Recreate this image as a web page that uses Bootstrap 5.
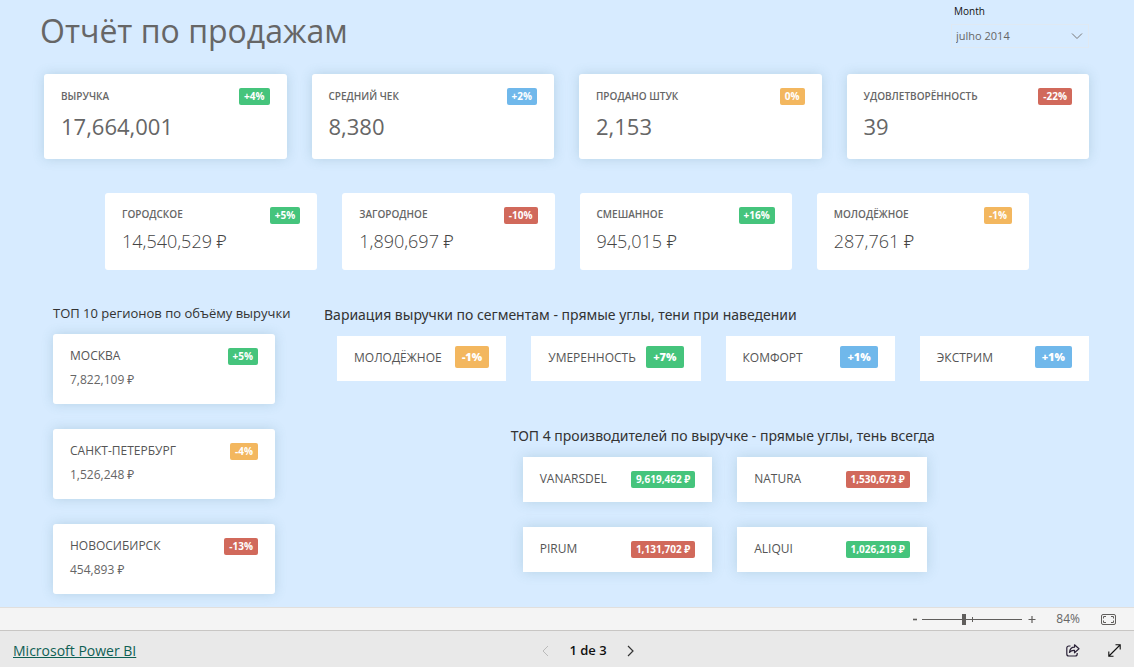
<!DOCTYPE html>
<html lang="ru">
<head>
<meta charset="utf-8">
<meta name="viewport" content="width=device-width, initial-scale=1">
<title>Отчёт по продажам</title>
<link href="https://cdn.jsdelivr.net/npm/bootstrap@5.3.0/dist/css/bootstrap.min.css" rel="stylesheet">
<style>
  body { font-family: "Open Sans", "Noto Sans", sans-serif; color: #666; background: #d7ebff; line-height: 1.2; }
  .report { padding: 8px 45px 12px 44px; }
  .report-title { font-size: 32px; font-weight: 400; line-height: 46px; margin: 0 0 2px -4px; color: #666; }
  .slicer { width: 138px; }
  .slicer label { font-size: 10px; line-height: 12px; color: #111; padding-left: 3px; margin-top: -3px; }
  .slicer .form-select { height: 24px; margin-top: 7px; padding: 0 24px 0 4px; font-size: 11px; line-height: 20px; color: #666; background-color: transparent; border: 1px solid #dfe9f3; border-radius: 0; background-size: 12px 12px; background-position: right 5px center;
    background-image: url("data:image/svg+xml,%3csvg xmlns='http://www.w3.org/2000/svg' viewBox='0 0 12 12'%3e%3cpath d='M1 3.5 6 8.5 11 3.5' fill='none' stroke='%23777'/%3e%3c/svg%3e"); }
  .tiles { display: grid; grid-template-columns: repeat(4, minmax(0, 1fr)); gap: 25px; }
  .tiles-two { grid-template-columns: repeat(2, minmax(0, 1fr)); }
  .tiles-one { grid-template-columns: minmax(0, 1fr); }
  .tiles-main { margin-top: 18px; }
  .tiles-areas { margin: 34px 60px 0 61px; }
  .tile { background: #fff; padding: 14px 17px; border-radius: 3px; }
  .tile-square { border-radius: 0; }
  .tile-shadow { box-shadow: 0 0 12px rgba(80, 135, 145, .24); }
  .tile-label { font-size: 10px; font-weight: 600; line-height: 17px; white-space: nowrap; }
  .tile-areas-label { line-height: 15px; }
  .tile-label-lg { font-size: 12px; font-weight: 500; line-height: 15px; color: #555; }
  .tile-value { white-space: nowrap; }
  .value-lg { font-size: 22px; line-height: 30px; margin-top: 6px; padding-bottom: 4px; }
  .value-md { font-size: 18px; font-weight: 300; line-height: 26px; margin-top: 4px; padding-bottom: 2px; color: #444; }
  .value-sm { font-size: 12px; line-height: 18px; margin-top: 6px; padding-bottom: 1px; }
  .pill { font-size: 10px; font-weight: 700; line-height: 17px; padding: 0 5px; border-radius: 2px; color: #fff; white-space: nowrap; }
  .pill-lg { font-size: 11px; font-weight: 800; line-height: 22px; padding: 0 7px; }
  .tile-slim { padding-top: 10px; padding-bottom: 13px; }
  .up { background: #45c47c; } .down { background: #d1695b; } .warn { background: #f3b75f; } .info { background: #70b8eb; }
  .lower { display: grid; grid-template-columns: minmax(0, 245fr) minmax(0, 765fr); column-gap: 35px; margin-top: 35px; }
  .regions { padding: 0 14px 0 9px; }
  .section-title { margin: 0; color: #333; font-family: "Noto Sans", sans-serif; font-size: 14px; font-weight: 400; line-height: 20px; }
  .regions .section-title { font-family: inherit; font-size: 13px; margin-bottom: 12px; line-height: 17px; }
  .segments .section-title { margin-bottom: 11px; }
  .segments .tiles { margin-left: 13px; }
  .makers { margin: 45px 21.2% 0 24.4%; }
  .makers .section-title { margin-bottom: 11px; white-space: nowrap; }
  .makers .tiles { margin-left: 12px; }
  .zoombar { height: 23px; background: #f4f4f4; border-top: 1px solid #e1dfdd; padding-right: 18px; color: #666; }
  .zoombar button, .pagebar button { border: 0; background: none; padding: 0; display: flex; color: inherit; }
  .zoom-range { appearance: none; width: 100px; height: 12px; margin: 0 6px 0 4px; background: linear-gradient(#605e5c, #605e5c) 50px 50%/1px 5px no-repeat, linear-gradient(#605e5c, #605e5c) 0 50%/100% 1px no-repeat; }
  .zoom-range::-webkit-slider-thumb { appearance: none; width: 4px; height: 11px; background: #605e5c; }
  .zoom-value { font-size: 12px; margin: 0 21px 0 20px; }
  .pagebar { display: grid; grid-template-columns: 1fr auto 1fr; align-items: center; height: 37px; background: #e9e9e9; border-top: 1px solid #c8c6c4; padding: 3px 13px 0; color: #111; }
  .pagebar a { color: #0f6054; font-size: 14px; font-weight: 400; }
  .pagebar nav { margin-left: 42px; }
  .page-count { font-size: 13px; font-weight: 600; }
</style>
</head>
<body class="d-flex flex-column min-vh-100">
<main class="report flex-grow-1">
  <header class="d-flex justify-content-between">
    <h1 class="report-title">Отчёт по продажам</h1>
    <div class="slicer">
      <label class="d-block" for="month">Month</label>
      <select class="form-select" id="month"><option>julho 2014</option></select>
    </div>
  </header>

  <section class="tiles tiles-main">
    <article class="tile tile-shadow"><div class="d-flex justify-content-between"><span class="tile-label">ВЫРУЧКА</span><span class="pill up">+4%</span></div><div class="tile-value value-lg">17,664,001</div></article>
    <article class="tile tile-shadow"><div class="d-flex justify-content-between"><span class="tile-label">СРЕДНИЙ ЧЕК</span><span class="pill info">+2%</span></div><div class="tile-value value-lg">8,380</div></article>
    <article class="tile tile-shadow"><div class="d-flex justify-content-between"><span class="tile-label">ПРОДАНО ШТУК</span><span class="pill warn">0%</span></div><div class="tile-value value-lg">2,153</div></article>
    <article class="tile tile-shadow"><div class="d-flex justify-content-between"><span class="tile-label">УДОВЛЕТВОРЁННОСТЬ</span><span class="pill down">-22%</span></div><div class="tile-value value-lg">39</div></article>
  </section>

  <section class="tiles tiles-areas">
    <article class="tile"><div class="d-flex justify-content-between"><span class="tile-label tile-areas-label">ГОРОДСКОЕ</span><span class="pill up">+5%</span></div><div class="tile-value value-md">14,540,529 ₽</div></article>
    <article class="tile"><div class="d-flex justify-content-between"><span class="tile-label tile-areas-label">ЗАГОРОДНОЕ</span><span class="pill down">-10%</span></div><div class="tile-value value-md">1,890,697 ₽</div></article>
    <article class="tile"><div class="d-flex justify-content-between"><span class="tile-label tile-areas-label">СМЕШАННОЕ</span><span class="pill up">+16%</span></div><div class="tile-value value-md">945,015 ₽</div></article>
    <article class="tile"><div class="d-flex justify-content-between"><span class="tile-label tile-areas-label">МОЛОДЁЖНОЕ</span><span class="pill warn">-1%</span></div><div class="tile-value value-md">287,761 ₽</div></article>
  </section>

  <div class="lower">
    <section class="regions">
      <h2 class="section-title text-nowrap">ТОП 10 регионов по объёму выручки</h2>
      <div class="tiles tiles-one">
        <article class="tile tile-shadow"><div class="d-flex justify-content-between"><span class="tile-label tile-label-lg">МОСКВА</span><span class="pill up">+5%</span></div><div class="tile-value value-sm">7,822,109 ₽</div></article>
        <article class="tile tile-shadow"><div class="d-flex justify-content-between"><span class="tile-label tile-label-lg">САНКТ-ПЕТЕРБУРГ</span><span class="pill warn">-4%</span></div><div class="tile-value value-sm">1,526,248 ₽</div></article>
        <article class="tile tile-shadow"><div class="d-flex justify-content-between"><span class="tile-label tile-label-lg">НОВОСИБИРСК</span><span class="pill down">-13%</span></div><div class="tile-value value-sm">454,893 ₽</div></article>
      </div>
    </section>
    <div>
      <section class="segments">
        <h2 class="section-title">Вариация выручки по сегментам - прямые углы, тени при наведении</h2>
        <div class="tiles">
          <article class="tile tile-square tile-slim d-flex justify-content-between align-items-center"><span class="tile-label tile-label-lg">МОЛОДЁЖНОЕ</span><span class="pill pill-lg warn">-1%</span></article>
          <article class="tile tile-square tile-slim d-flex justify-content-between align-items-center"><span class="tile-label tile-label-lg">УМЕРЕННОСТЬ</span><span class="pill pill-lg up">+7%</span></article>
          <article class="tile tile-square tile-slim d-flex justify-content-between align-items-center"><span class="tile-label tile-label-lg">КОМФОРТ</span><span class="pill pill-lg info">+1%</span></article>
          <article class="tile tile-square tile-slim d-flex justify-content-between align-items-center"><span class="tile-label tile-label-lg">ЭКСТРИМ</span><span class="pill pill-lg info">+1%</span></article>
        </div>
      </section>
      <section class="makers">
        <h2 class="section-title">ТОП 4 производителей по выручке - прямые углы, тень всегда</h2>
        <div class="tiles tiles-two">
          <article class="tile tile-square tile-shadow d-flex justify-content-between"><span class="tile-label tile-label-lg">VANARSDEL</span><span class="pill up">9,619,462 ₽</span></article>
          <article class="tile tile-square tile-shadow d-flex justify-content-between"><span class="tile-label tile-label-lg">NATURA</span><span class="pill down">1,530,673 ₽</span></article>
          <article class="tile tile-square tile-shadow d-flex justify-content-between"><span class="tile-label tile-label-lg">PIRUM</span><span class="pill down">1,131,702 ₽</span></article>
          <article class="tile tile-square tile-shadow d-flex justify-content-between"><span class="tile-label tile-label-lg">ALIQUI</span><span class="pill up">1,026,219 ₽</span></article>
        </div>
      </section>
    </div>
  </div>
</main>

<div class="zoombar d-flex align-items-center justify-content-end">
  <button type="button" aria-label="Zoom out"><svg width="6" height="9" viewBox="0 0 6 9"><path d="M1 4.5h4" stroke="#605e5c" stroke-width="1.6"/></svg></button>
  <input class="zoom-range" type="range" min="0" max="100" value="41" aria-label="Zoom">
  <button type="button" aria-label="Zoom in"><svg width="8" height="9" viewBox="0 0 8 9"><path d="M.5 4.5h7M4 1v7" stroke="#605e5c" stroke-width="1.2"/></svg></button>
  <span class="zoom-value">84%</span>
  <button type="button" aria-label="Fit to page"><svg width="15" height="11" viewBox="0 0 15 11" fill="none" stroke="#605e5c"><rect x=".5" y=".5" width="14" height="10" rx="1.5"/><path d="M5 2.500H2.500V4.500M10 2.500h2.500V4.500M5 8.500H2.500V6.500M10 8.500h2.500V6.500"/></svg></button>
</div>

<footer class="pagebar">
  <div><a href="#">Microsoft Power BI</a></div>
  <nav class="d-flex align-items-center" aria-label="Pages">
    <button type="button" aria-label="Previous page" disabled><svg width="7" height="12" viewBox="0 0 7 12"><path d="M6 1 1 6l5 5" fill="none" stroke="#bbb"/></svg></button>
    <span class="page-count mx-3 px-1">1 de 3</span>
    <button type="button" aria-label="Next page"><svg width="7" height="12" viewBox="0 0 7 12"><path d="M1 1l5 5-5 5" fill="none" stroke="#333" stroke-width="1.2"/></svg></button>
  </nav>
  <div class="d-flex justify-content-end align-items-center gap-4">
    <button type="button" class="me-1" aria-label="Share"><svg width="14" height="13" viewBox="0 0 14 13" fill="none" stroke="#2b2238" stroke-width="1.2" stroke-linejoin="round"><path d="M4.500 2H2.800a2 2 0 0 0-2 2v6a2 2 0 0 0 2 2h6.400a2 2 0 0 0 2-2V9"/><path d="M8.500.8v2.400C5.500 3.200 3.800 5 3.500 8.500 4.700 6.900 6.300 6.200 8.500 6.400v2.400L13 4.800z"/></svg></button>
    <button type="button" aria-label="Full screen"><svg width="13" height="13" viewBox="0 0 13 13" fill="none" stroke="#111" stroke-width="1.1"><path d="M1 12 12 1M7.500.8h4.700v4.700M.8 7.500v4.700h4.700"/></svg></button>
  </div>
</footer>
<script src="https://cdn.jsdelivr.net/npm/bootstrap@5.3.0/dist/js/bootstrap.bundle.min.js"></script>
</body>
</html>
